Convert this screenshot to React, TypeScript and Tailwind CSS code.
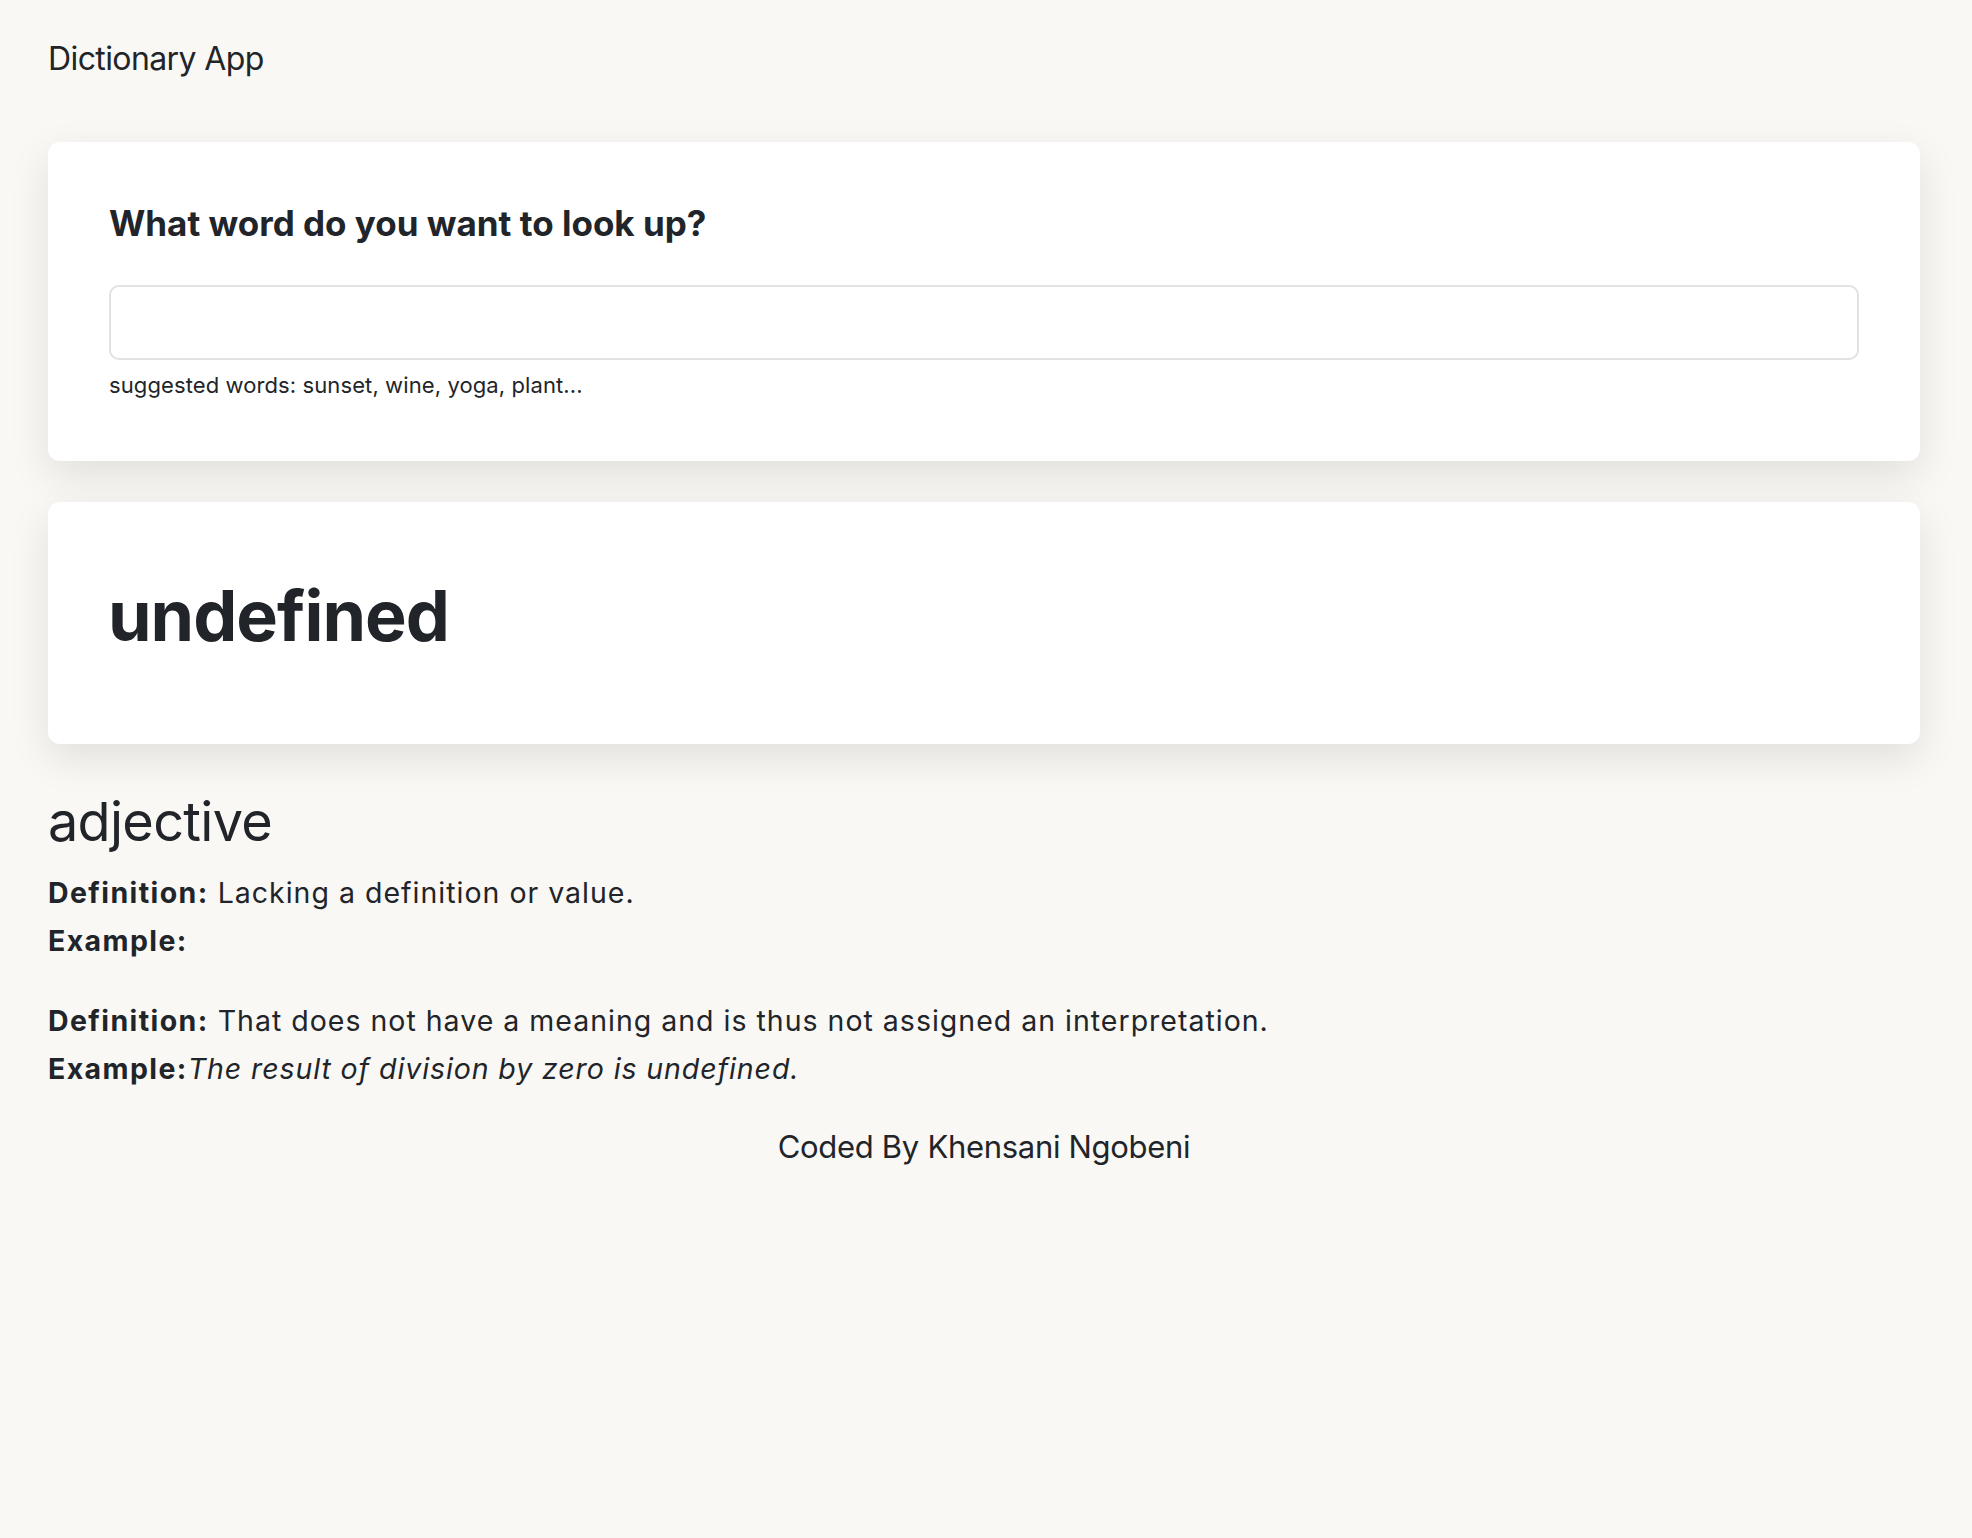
import React from "react"

const meanings = [
  { definition: "Lacking a definition or value.", example: "" },
  {
    definition: "That does not have a meaning and is thus not assigned an interpretation.",
    example: "The result of division by zero is undefined.",
  },
]

export default function App() {
  return (
    <div className="min-h-screen bg-[#f9f8f5] text-[#212529] font-['Inter',sans-serif]">
      <div className="pl-12 pr-[52px] pt-[35px] pb-20">
        <header className="text-[32px] leading-[48px] tracking-[-0.6px]">Dictionary App</header>

        <section className="mt-[59px] bg-white rounded-[12px] shadow-[0_14px_40px_rgba(0,0,0,0.1)] px-[61px] pt-[61px] pb-[60px]">
          <h2 className="text-[35px] leading-[40px] font-bold tracking-[0px]">What word do you want to look up?</h2>
          <input
            type="search"
            className="mt-[42px] block w-full h-[75px] rounded-[10px] border-2 border-[#e2e2e2] bg-white outline-none px-4 text-[28px]"
          />
          <div className="mt-[10px] text-[22px] leading-[31px] tracking-[0.1px]">suggested words: sunset, wine, yoga, plant...</div>
        </section>

        <section className="mt-[41px] bg-white rounded-[12px] shadow-[0_14px_40px_rgba(0,0,0,0.1)] px-[60px] pt-[72px] pb-[72px]">
          <h1 className="text-[70px] leading-[84px] font-bold tracking-[-1px] mb-[14px]">undefined</h1>
        </section>

        <div className="mt-[44px]">
          <h3 className="text-[54px] leading-[67px] mb-[14px] tracking-[-0.7px]">adjective</h3>
          {meanings.map((m, i) => (
            <div key={i} className={i > 0 ? "mt-8" : ""}>
              <div className="text-[28.5px] leading-[48px] tracking-[1px]">
                <strong className="font-bold tracking-[1.4px]">Definition:</strong> {m.definition}
              </div>
              <div className="text-[28.5px] leading-[48px] tracking-[1px]">
                <strong className="font-bold tracking-[1.4px]">Example:</strong>
                <em className="italic tracking-[0.9px]">{m.example}</em>
              </div>
            </div>
          ))}
        </div>

        <footer className="mt-[30px] text-center text-[31px] leading-[48px] tracking-[-0.3px]">Coded By Khensani Ngobeni</footer>
      </div>
    </div>
  )
}
